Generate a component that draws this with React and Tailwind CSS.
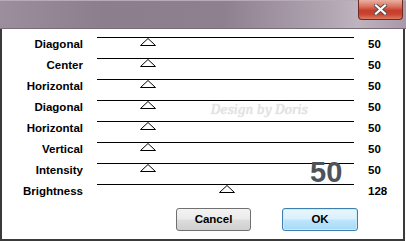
import React from "react";

const rows = [
  { label: "Diagonal", value: 50 },
  { label: "Center", value: 50 },
  { label: "Horizontal", value: 50 },
  { label: "Diagonal", value: 50 },
  { label: "Horizontal", value: 50 },
  { label: "Vertical", value: 50 },
  { label: "Intensity", value: 50 },
  { label: "Brightness", value: 128 },
];

const SLIDER_W = 257;

function Row({ label, value }) {
  const center = (value / 255) * SLIDER_W + 1;
  return (
    <div className="flex h-[21px] items-stretch">
      <div className="w-[81px] text-right leading-[21px]">{label}</div>
      <div className="relative ml-[14px] w-[257px]">
        <div className="mt-[3px] h-px bg-black" />
        <svg
          className="absolute top-[4px]"
          style={{ left: center - 8 }}
          width="16"
          height="8"
          viewBox="0 0 16 8"
        >
          <polygon points="8,0.5 15.5,7.5 0.5,7.5" fill="white" stroke="black" strokeWidth="1" />
        </svg>
      </div>
      <div className="ml-[14px] leading-[21px]">{value}</div>
    </div>
  );
}

export default function App() {
  return (
    <div
      className="flex h-[241px] w-[406px] flex-col bg-white text-[11.5px] font-bold text-black"
      style={{ fontFamily: '"Liberation Sans", Arial, sans-serif' }}
    >
      <div className="flex h-[29px] shrink-0 justify-end border-t border-[#b8abb8] border-b border-b-[#7a6c7b] bg-[linear-gradient(to_right,#9c8e9d_0%,#8d7e8e_25%,#8f8090_55%,#b3a7b4_82%,#bfb3bf_88%,#a899a9_100%)] pr-[3px]">
        <div className="-mt-px flex h-[20px] w-[45px] items-center justify-center rounded-b-[4px] border border-t-0 border-[#6e2b22] bg-[linear-gradient(to_bottom,#eab0a2_0%,#d9705d_35%,#c63e2b_55%,#c9432f_75%,#dc7a63_100%)]">
          <svg width="13" height="11" viewBox="0 0 13 11">
            <path d="M2 1.5 L11 9.5 M11 1.5 L2 9.5" stroke="#5a4a4a" strokeWidth="4" strokeLinecap="square" />
            <path d="M2 1.5 L11 9.5 M11 1.5 L2 9.5" stroke="#ffffff" strokeWidth="2.2" strokeLinecap="square" />
          </svg>
        </div>
      </div>
      <div className="relative mr-px flex flex-1 flex-col border-x-2 border-b-2 border-[#3a3a3a] pt-[5px]">
        {rows.map((r, i) => (
          <Row key={i} label={r.label} value={r.value} />
        ))}
        <div className="mt-[6px] flex gap-[31px] pl-[174px]">
          <button className="flex h-[23px] w-[75px] items-center justify-center rounded-[3px] border border-[#707070] bg-[linear-gradient(to_bottom,#f3f3f3_0%,#ebebeb_48%,#dddddd_52%,#cfcfcf_100%)] font-bold">
            Cancel
          </button>
          <button className="flex h-[23px] w-[76px] items-center justify-center rounded-[3px] border border-[#3c7fb1] bg-[linear-gradient(to_bottom,#eaf6fd_0%,#d9f0fc_48%,#bee6fd_52%,#a7d9f5_100%)] font-bold shadow-[inset_0_0_0_1px_#c8ecfc]">
            OK
          </button>
        </div>
        <div className="pointer-events-none absolute left-[308px] top-[129px] text-[29px] leading-none font-bold text-[#4c535a]">
          50
        </div>
        <div className="pointer-events-none absolute left-[209px] top-[72px] text-[12px] font-normal italic text-[#e6e6e6] [text-shadow:0_0_1px_#c4c4c4]" style={{ fontFamily: '"DejaVu Serif", serif' }}>
          Design by Doris
        </div>
      </div>
    </div>
  );
}
